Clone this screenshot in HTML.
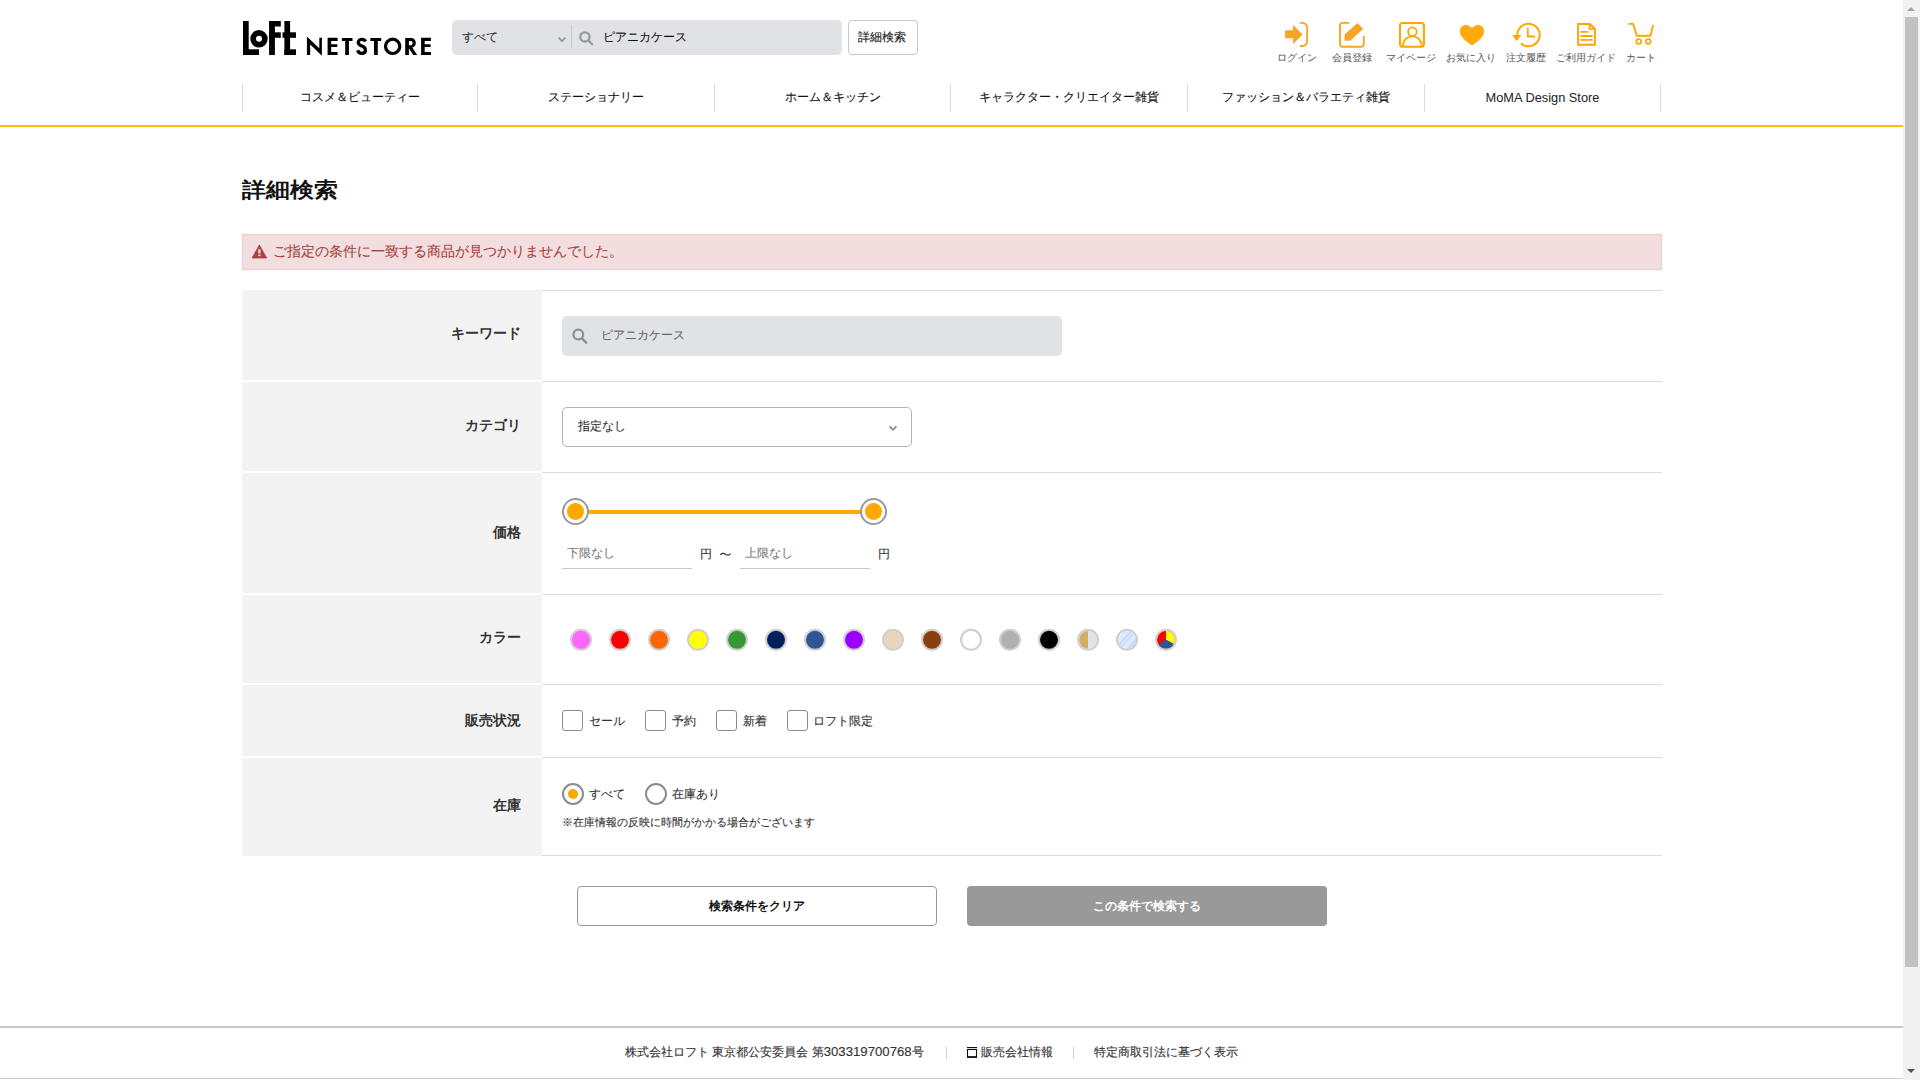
<!DOCTYPE html>
<html lang="ja">
<head>
<meta charset="utf-8">
<title>詳細検索 | ロフト公式通販サイト</title>
<style>
*{box-sizing:border-box;margin:0;padding:0}
html,body{width:1920px;height:1080px;overflow:hidden;background:#fff}
body{position:relative;font-family:"Liberation Sans",sans-serif;color:#333;font-size:12px;-webkit-text-stroke:0.12px currentColor}
.th,#ttl,.lbl{-webkit-text-stroke:0}
.a{position:absolute;white-space:nowrap}
.sb{position:absolute;left:1903px;top:0;width:17px;height:1080px;background:#f1f1f1}
.sb .thumb{position:absolute;left:2px;top:17px;width:13px;height:950px;background:#c1c1c1}
.sb .up,.sb .dn{position:absolute;left:4px;width:0;height:0;border-left:4px solid transparent;border-right:4px solid transparent}
.sb .up{top:7px;border-bottom:4px solid #a3a3a3}
.sb .dn{top:1069px;border-top:4px solid #505050}
/* header */
.search{left:452px;top:20px;width:390px;height:35px;background:#e1e2e6;border-radius:5px}
.dbtn{left:848px;top:20px;width:70px;height:35px;border:1px solid #c8c8c8;border-radius:4px;background:#fff}
.ico{position:absolute}
.lbl{position:absolute;font-size:10px;color:#555;line-height:12px;text-align:center;width:80px}
.nav{left:242px;top:84px;height:28px;width:1419px}
.nav .c{position:absolute;top:0;height:28px;border-left:1px solid #ddd;text-align:center;font-size:12px;line-height:27px;color:#111}
.yl{left:0;top:125px;width:1903px;height:2px;background:#f5c400}
/* table */
.th{position:absolute;left:242px;width:300px;background:#f3f3f3;font-size:14px;font-weight:bold;color:#333;text-align:right;padding-right:21px}
.hl{position:absolute;left:542px;width:1120px;height:1px;background:#dcdcdc}
.cb{width:21px;height:21px;border:1px solid #8c8c8c;border-radius:3px;background:#fff}
.rd{width:22px;height:22px;border:2px solid #8c8c8c;border-radius:50%;background:#fff}
</style>
</head>
<body>
<!-- scrollbar -->
<div class="sb"><div class="up"></div><div class="thumb"></div><div class="dn"></div></div>

<!-- logo -->
<svg class="a" style="left:236px;top:14px" width="200" height="48" viewBox="236 14 200 48">
  <g fill="#000">
    <rect x="243" y="21" width="5.7" height="34"/>
    <rect x="243" y="49.3" width="16" height="5.7"/>
    <circle cx="259" cy="38.8" r="5.85" fill="none" stroke="#000" stroke-width="5.7"/>
    <rect x="269.1" y="21" width="5.8" height="34"/>
    <rect x="269.1" y="21" width="11.7" height="5.5"/>
    <rect x="269.1" y="32.3" width="11.7" height="5.5"/>
    <rect x="284.4" y="21" width="5.7" height="34"/>
    <rect x="282.5" y="32.3" width="13.5" height="5.5"/>
    <rect x="284.4" y="49.3" width="11.6" height="5.7"/>
    <!-- NETSTORE -->
    <path d="M306.9,36.4 L319.3,48.2 L319.3,37.8 L321.9,37.8 L321.9,55.7 L310.2,44.6 L310.2,55 L306.9,55 Z"/>
    <path d="M327.6,37.8 H337.6 V41 H331.2 V44.2 H337.3 V46.9 H331.2 V51.9 H337.6 V55 H327.6 Z"/>
    <path d="M341.9,37.9 H352.5 V40.9 H348.9 V55 H345.2 V40.9 H341.9 Z"/>
    <path d="M365.6,41.4 C364.9,40 363.5,39.3 361.9,39.3 C359.8,39.3 358.3,40.6 358.3,42.4 C358.3,44.6 360.4,45.3 362.2,46.1 C364.3,47 365.5,48.2 365.5,50.3 C365.5,52.3 363.9,53.4 361.7,53.4 C359.7,53.4 358.2,52.1 357.7,50.3" fill="none" stroke="#000" stroke-width="3.3"/>
    <path d="M370.4,37.9 H381.2 V40.9 H377.8 V55 H374 V40.9 H370.4 Z"/>
    <circle cx="392.65" cy="46.35" r="7.15" fill="none" stroke="#000" stroke-width="3.2"/>
    <path fill-rule="evenodd" d="M405.2,37.9 L411.3,37.9 C414,37.9 415.8,40.1 415.8,42.9 C415.8,45.4 414.3,47.1 412.3,47.6 L417.2,55 L413.2,55 L408.9,48.2 L408.9,55 L405.2,55 Z M408.9,41.1 L411,41.1 C412.2,41.1 412.6,42.1 412.6,43.1 C412.6,44.3 412,45.2 410.9,45.2 L408.9,45.2 Z"/>
    <path d="M421.1,37.8 H430.9 V41 H424.7 V44.2 H430.6 V46.9 H424.7 V51.9 H430.9 V55 H421.1 Z"/>
  </g>
</svg>

<!-- search bar -->
<div class="a search"></div>
<div class="a" id="hs1" style="left:462px;top:29px;font-size:12px;line-height:16px;color:#333">すべて</div>
<svg class="a" style="left:540px;top:20px" width="70" height="35" viewBox="540 20 70 35">
  <polyline points="558.6,37.6 562,41.2 565.3,37.6" fill="none" stroke="#999" stroke-width="1.8"/>
  <rect x="571" y="25" width="1" height="23" fill="#c9c9c9"/>
  <circle cx="584.9" cy="36.9" r="4.6" fill="none" stroke="#999" stroke-width="2.3"/>
  <line x1="588.6" y1="40.7" x2="592.2" y2="44.3" stroke="#999" stroke-width="2.3" stroke-linecap="round"/>
</svg>
<div class="a" id="hs2" style="left:603px;top:29px;font-size:12px;line-height:16px;color:#111">ピアニカケース</div>
<div class="a dbtn"></div>
<div class="a" id="hs3" style="left:858px;top:29px;font-size:12px;line-height:16px;color:#222">詳細検索</div>

<!-- header icons -->
<svg class="a" style="left:1270px;top:18px" width="400" height="32" viewBox="1270 18 400 32">
  <g fill="#f6a526">
    <path d="M1285.1,30.3 H1293.1 V25 L1302.6,34.4 L1293.1,43.9 V38.3 H1285.1 Z"/>
    <path d="M1299.9,22.9 H1302.5 A4.6,4.6 0 0 1 1307.1,27.5 V41.4 A4.6,4.6 0 0 1 1302.5,46 H1299.9" fill="none" stroke="#f6a526" stroke-width="1.8"/>
    <path d="M1348.5,22.9 H1342.8 A2.8,2.8 0 0 0 1340,25.7 V44 A2.8,2.8 0 0 0 1342.8,46.8 H1361 A2.8,2.8 0 0 0 1363.8,44 V36.7" fill="none" stroke="#f6a526" stroke-width="1.9" stroke-linecap="round"/>
    <path d="M1357.5,23.1 L1363.1,28.9 L1350.2,40.7 L1344.5,40.7 L1344.5,34.6 Z"/>
  </g>
  <g fill="none" stroke="#ffa600" stroke-width="2">
    <rect x="1400" y="23.05" width="23.9" height="23.75" rx="2.5" stroke-width="2.1"/>
    <circle cx="1412.4" cy="31.7" r="4.3" stroke-width="1.8"/>
    <path d="M1402.9,46.8 C1402.9,40.2 1407,36.3 1412.4,36.3 C1417.8,36.3 1421.8,40.2 1421.8,46.8" stroke-width="1.8"/>
  </g>
  <path fill="#ffa90a" d="M1472,28.1 C1470,25.6 1468,24.9 1465.9,24.9 C1462.5,24.9 1459.9,27.6 1459.9,31.2 C1459.9,34.8 1462.2,37.6 1465,40.3 L1470,44.3 C1471.2,45.2 1472.8,45.2 1474,44.3 L1479,40.3 C1481.8,37.6 1484.1,34.8 1484.1,31.2 C1484.1,27.6 1481.5,24.9 1478.1,24.9 C1476,24.9 1474,25.6 1472,28.1 Z"/>
  <g fill="none" stroke="#ffa600" stroke-width="2">
    <path d="M1521.7,43.9 A11.2,11.2 0 1 0 1517.3,35" stroke-linecap="round"/>
    <polyline points="1527.8,28.3 1527.8,36.5 1534.4,36.5" stroke-width="1.8" stroke-linecap="round"/>
  </g>
  <path fill="#ffa600" d="M1512.2,35.1 L1521.3,35.1 L1516.5,40.9 Z"/>
  <g fill="none" stroke="#ffa600" stroke-width="1.95">
    <path d="M1589.8,24 H1578.1 V44.8 H1594.9 V28.8 Z"/>
    <path d="M1589.6,24.3 V28.9 H1594.6" stroke-width="1.8"/>
    <path d="M1581.2,31.9 H1587.8 M1581.2,36 H1591.9 M1581.2,39.9 H1591.9" stroke-width="1.8" stroke-linecap="round"/>
  </g>
  <g fill="none" stroke="#ffa600" stroke-width="1.9">
    <polyline points="1629.1,23.9 1633.2,23.9 1636.8,35.8 1650.4,35.8 1653,25.8" stroke-linecap="round" stroke-linejoin="round"/>
    <circle cx="1638.7" cy="41.4" r="2.4" stroke-width="1.7"/>
    <circle cx="1648.3" cy="41.4" r="2.4" stroke-width="1.7"/>
  </g>
</svg>
<div class="lbl" id="l1" style="left:1256.5px;top:52px">ログイン</div>
<div class="lbl" style="left:1311.5px;top:52px">会員登録</div>
<div class="lbl" style="left:1371.4px;top:52px">マイページ</div>
<div class="lbl" style="left:1431.2px;top:52px">お気に入り</div>
<div class="lbl" style="left:1486.3px;top:52px">注文履歴</div>
<div class="lbl" style="left:1546.4px;top:52px">ご利用ガイド</div>
<div class="lbl" style="left:1601.3px;top:52px">カート</div>

<!-- nav -->
<div class="a nav">
  <div class="c" style="left:0;width:235px">コスメ＆ビューティー</div>
  <div class="c" style="left:235px;width:237px">ステーショナリー</div>
  <div class="c" style="left:472px;width:236px">ホーム＆キッチン</div>
  <div class="c" style="left:708px;width:237px">キャラクター・クリエイター雑貨</div>
  <div class="c" style="left:945px;width:237px">ファッション＆バラエティ雑貨</div>
  <div class="c" style="left:1182px;width:237px;border-right:1px solid #ddd;font-size:12.8px;-webkit-text-stroke:0;color:#222">MoMA Design Store</div>
</div>
<div class="a yl"></div>

<!-- title -->
<div class="a" id="ttl" style="left:242px;top:178.5px;font-size:23.6px;line-height:26px;transform:scaleY(0.88);transform-origin:0 0;font-weight:bold;color:#111">詳細検索</div>

<!-- alert -->
<div class="a" style="left:242px;top:234px;width:1420px;height:36px;background:#f2dede;border:1px solid #ebccd1"></div>
<svg class="a" style="left:250px;top:242px" width="20" height="20" viewBox="250 242 20 20">
  <path d="M259.4,244.9 L266.7,258 L252.1,258 Z" fill="#a94442" stroke="#a94442" stroke-width="0.8" stroke-linejoin="round"/>
  <rect x="258.3" y="249.4" width="2.2" height="4" fill="#f2dede"/>
  <rect x="258.3" y="254.5" width="2.2" height="1.6" fill="#f2dede"/>
</svg>
<div class="a" id="alt" style="left:273px;top:242px;font-size:14px;line-height:18px;color:#a94442">ご指定の条件に一致する商品が見つかりませんでした。</div>

<!-- table rows -->
<div class="th" style="top:290px;height:90px;line-height:86px">キーワード</div>
<div class="th" style="top:382px;height:89px;line-height:87px">カテゴリ</div>
<div class="th" style="top:473px;height:120px;line-height:118px">価格</div>
<div class="th" style="top:595px;height:88px;line-height:84px">カラー</div>
<div class="th" style="top:685px;height:71px;line-height:70px">販売状況</div>
<div class="th" style="top:758px;height:98px;line-height:94px">在庫</div>
<div class="hl" style="top:290px"></div>
<div class="hl" style="top:381px"></div>
<div class="hl" style="top:472px"></div>
<div class="hl" style="top:594px"></div>
<div class="hl" style="top:684px"></div>
<div class="hl" style="top:757px"></div>
<div class="hl" style="top:855px"></div>

<!-- keyword -->
<div class="a" style="left:562px;top:316px;width:500px;height:40px;background:#e1e2e6;border-radius:5px"></div>
<svg class="a" style="left:566px;top:322px" width="28" height="28" viewBox="566 322 28 28">
  <circle cx="578.3" cy="334.6" r="4.9" fill="none" stroke="#8e8e8e" stroke-width="2.2"/>
  <line x1="582.2" y1="338.6" x2="586.2" y2="342.6" stroke="#8e8e8e" stroke-width="2.3" stroke-linecap="round"/>
</svg>
<div class="a" id="kw" style="left:601px;top:327px;font-size:12px;line-height:16px;color:#666">ピアニカケース</div>

<!-- category select -->
<div class="a" style="left:562px;top:407px;width:350px;height:40px;border:1px solid #b4b4b4;border-radius:5px;background:#fff"></div>
<div class="a" id="cat" style="left:578px;top:418px;font-size:12px;line-height:16px;color:#333">指定なし</div>
<svg class="a" style="left:884px;top:420px" width="18" height="16" viewBox="884 420 18 16">
  <polyline points="889.6,426.3 893,429.8 896.4,426.3" fill="none" stroke="#8a8a8a" stroke-width="1.8"/>
</svg>

<!-- price slider -->
<div class="a" style="left:575px;top:510px;width:298px;height:4px;background:#ffa800"></div>
<div class="a" style="left:562px;top:498px;width:27px;height:27px;border:2px solid #9a9a9a;border-radius:50%;background:#fff"></div>
<div class="a" style="left:566.8px;top:502.8px;width:17px;height:17px;border-radius:50%;background:#ffa800"></div>
<div class="a" style="left:860px;top:498px;width:27px;height:27px;border:2px solid #9a9a9a;border-radius:50%;background:#fff"></div>
<div class="a" style="left:865px;top:502.8px;width:17px;height:17px;border-radius:50%;background:#ffa800"></div>
<div class="a" style="left:562px;top:568px;width:130px;height:1px;background:#c8c8c8"></div>
<div class="a" style="left:740px;top:568px;width:130px;height:1px;background:#c8c8c8"></div>
<div class="a" id="p1" style="left:567px;top:545px;font-size:12px;line-height:16px;color:#7a7a7a">下限なし</div>
<div class="a" id="p2" style="left:700px;top:546px;font-size:12px;line-height:16px;color:#333">円</div>
<svg class="a" style="left:718px;top:549px" width="15" height="10" viewBox="718 549 15 10"><path d="M720.5,555 C721.5,553 723.5,552.8 725.5,554.2 C727.3,555.5 729,555.8 730.5,553.5" fill="none" stroke="#333" stroke-width="1.2"/></svg>
<div class="a" id="p4" style="left:745px;top:545px;font-size:12px;line-height:16px;color:#7a7a7a">上限なし</div>
<div class="a" id="p5" style="left:878px;top:546px;font-size:12px;line-height:16px;color:#333">円</div>

<!-- colors -->
<svg class="a" style="left:560px;top:620px" width="630" height="40" viewBox="560 620 630 40">
  <defs>
    <clipPath id="cg"><circle cx="1088" cy="639.8" r="9"/></clipPath>
    <clipPath id="cc"><circle cx="1127" cy="639.8" r="9"/></clipPath>
    <clipPath id="cm"><circle cx="1166" cy="639.8" r="9"/></clipPath>
  </defs>
  <g stroke="#cfcfcf" stroke-width="2">
    <circle cx="581" cy="639.8" r="10" fill="#ff66ff"/>
    <circle cx="620" cy="639.8" r="10" fill="#ff0000"/>
    <circle cx="659" cy="639.8" r="10" fill="#ff6600"/>
    <circle cx="698" cy="639.8" r="10" fill="#ffff00"/>
    <circle cx="737" cy="639.8" r="10" fill="#339933"/>
    <circle cx="776" cy="639.8" r="10" fill="#001f5f"/>
    <circle cx="815" cy="639.8" r="10" fill="#2f5597"/>
    <circle cx="854" cy="639.8" r="10" fill="#9900ff"/>
    <circle cx="893" cy="639.8" r="10" fill="#e8d8b9"/>
    <circle cx="932" cy="639.8" r="10" fill="#8b3f0f"/>
    <circle cx="971" cy="639.8" r="10" fill="#ffffff"/>
    <circle cx="1010" cy="639.8" r="10" fill="#b0b0b0"/>
    <circle cx="1049" cy="639.8" r="10" fill="#000000"/>
  </g>
  <g clip-path="url(#cg)">
    <rect x="1078" y="629" width="10" height="22" fill="#d3ae62"/>
    <rect x="1088" y="629" width="10" height="22" fill="#e3e3e3"/>
  </g>
  <g clip-path="url(#cc)">
    <rect x="1117" y="629" width="20" height="22" fill="#dfeafa"/>
    <path d="M1118,644 L1130,631 L1132,632 L1120,645 Z M1120,647 L1133,633 L1134,634 L1121,648 Z" fill="#c5daf7"/>
    <path d="M1126,649 L1137,637 L1137,645 L1131,650 Z" fill="#c5daf7"/>
  </g>
  <g clip-path="url(#cm)">
    <rect x="1150" y="625" width="35" height="30" fill="#2f5597"/>
    <path d="M1166,639.8 L1166,625 L1150,625 L1150,650 Z" fill="#ff0000"/>
    <path d="M1166,639.8 L1166,625 L1185,625 L1185,650 Z" fill="#ffff00"/>
    <path d="M1166,639.8 L1150,650 L1150,660 L1185,660 L1185,650 Z" fill="#2f5597"/>
  </g>
  <circle cx="1088" cy="639.8" r="10" fill="none" stroke="#cfcfcf" stroke-width="2"/>
  <circle cx="1127" cy="639.8" r="10" fill="none" stroke="#cfcfcf" stroke-width="2"/>
  <circle cx="1166" cy="639.8" r="10" fill="none" stroke="#cfcfcf" stroke-width="2"/>
</svg>

<!-- checkboxes -->
<div class="a cb" style="left:562px;top:710px"></div>
<div class="a" id="c1" style="left:589px;top:713px;font-size:12px;line-height:16px;color:#333">セール</div>
<div class="a cb" style="left:645px;top:710px"></div>
<div class="a" style="left:672px;top:713px;font-size:12px;line-height:16px;color:#333">予約</div>
<div class="a cb" style="left:716px;top:710px"></div>
<div class="a" style="left:743px;top:713px;font-size:12px;line-height:16px;color:#333">新着</div>
<div class="a cb" style="left:787px;top:710px"></div>
<div class="a" style="left:813px;top:713px;font-size:12px;line-height:16px;color:#333">ロフト限定</div>

<!-- radios -->
<div class="a rd" style="left:562px;top:783px"></div>
<div class="a" style="left:568px;top:789px;width:10px;height:10px;border-radius:50%;background:#ffa800"></div>
<div class="a" id="r1" style="left:589px;top:786px;font-size:12px;line-height:16px;color:#333">すべて</div>
<div class="a rd" style="left:645px;top:783px"></div>
<div class="a" style="left:672px;top:786px;font-size:12px;line-height:16px;color:#333">在庫あり</div>
<div class="a" id="nt" style="left:562px;top:814px;font-size:11px;line-height:16px;color:#333">※在庫情報の反映に時間がかかる場合がございます</div>

<!-- buttons -->
<div class="a" style="left:577px;top:886px;width:360px;height:40px;border:1px solid #999;border-radius:4px;background:#fff;text-align:center;font-size:12px;font-weight:bold;-webkit-text-stroke:0;line-height:38px;color:#111">検索条件をクリア</div>
<div class="a" style="left:967px;top:886px;width:360px;height:40px;border-radius:4px;background:#999;text-align:center;font-size:12px;font-weight:bold;-webkit-text-stroke:0;line-height:40px;color:#fff">この条件で検索する</div>

<!-- footer -->
<div class="a" style="left:0;top:1026px;width:1903px;height:2px;background:#c8c8c8"></div>
<div class="a" id="ft1" style="left:625px;top:1044px;font-size:12px;line-height:16px;color:#333">株式会社ロフト 東京都公安委員会 第<span style="font-size:13.2px">303319700768</span>号</div>
<div class="a" style="left:946px;top:1047px;width:1px;height:12px;background:#d0d0d0"></div>
<svg class="a" style="left:965px;top:1045px" width="14" height="14" viewBox="965 1045 14 14">
  <rect x="967" y="1047" width="10" height="1.1" fill="#111"/>
  <rect x="967.5" y="1049.5" width="9" height="7.6" fill="none" stroke="#111" stroke-width="1.1"/>
  <rect x="967" y="1056.2" width="10" height="1.6" fill="#111"/>
</svg>
<div class="a" id="ft2" style="left:981px;top:1044px;font-size:12px;line-height:16px;color:#333">販売会社情報</div>
<div class="a" style="left:1073px;top:1047px;width:1px;height:12px;background:#d0d0d0"></div>
<div class="a" id="ft3" style="left:1094px;top:1044px;font-size:12px;line-height:16px;color:#333">特定商取引法に基づく表示</div>
<div class="a" style="left:0;top:1078px;width:1903px;height:1px;background:#cccccc"></div>

</body>
</html>
